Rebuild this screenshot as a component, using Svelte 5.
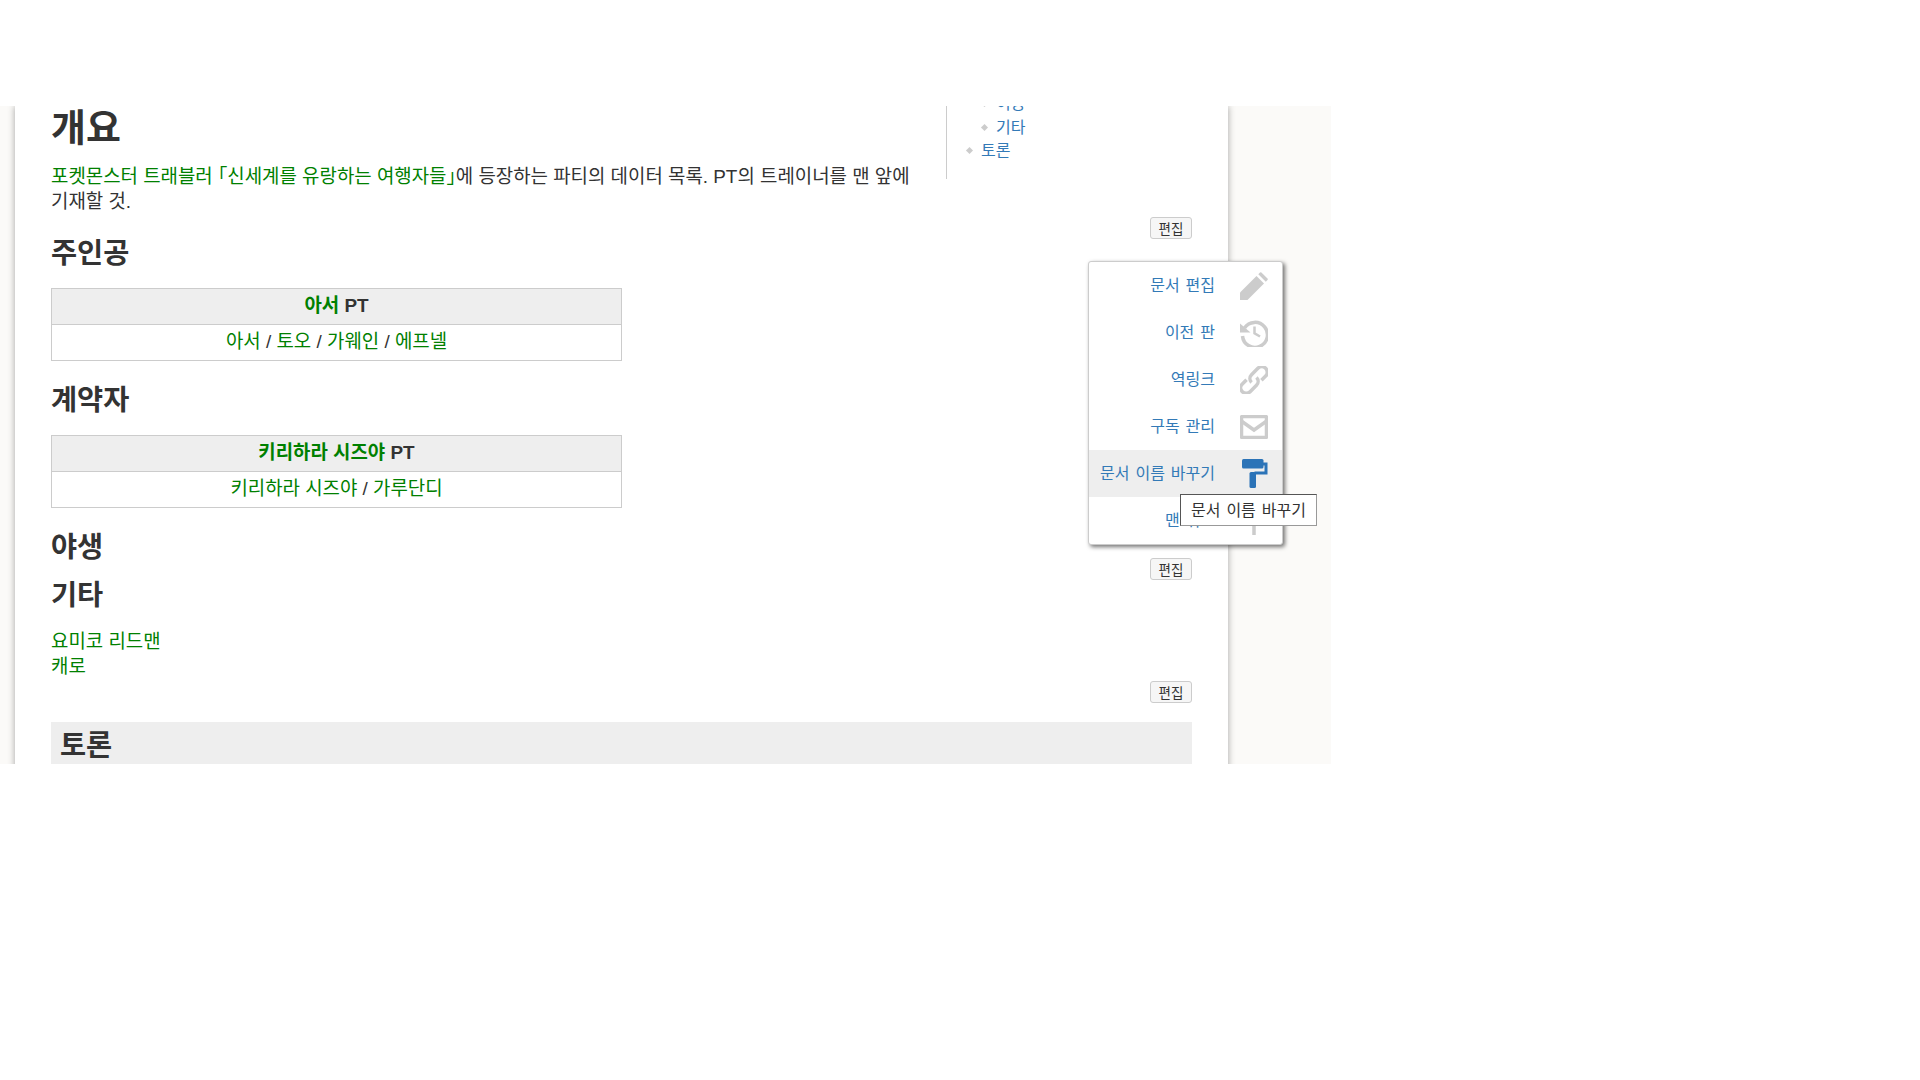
<script>
	const menu = [
		{ label: '문서 편집', icon: 'pencil' },
		{ label: '이전 판', icon: 'history' },
		{ label: '역링크', icon: 'link' },
		{ label: '구독 관리', icon: 'mail' },
		{ label: '문서 이름 바꾸기', icon: 'roller', active: true },
		{ label: '맨 위로', icon: 'up' }
	];
</script>

<div class="stage">
	<article class="page">
		<nav class="toc">
			<ul>
				<li class="sub"><a href="#a">이용</a></li>
				<li class="sub"><a href="#a">기타</a></li>
				<li><a href="#a">토론</a></li>
			</ul>
		</nav>

		<h1>개요</h1>
		<p class="intro">
			<a href="#a">포켓몬스터 트래블러 「신세계를 유랑하는 여행자들」</a>에 등장하는 파티의 데이터 목록. PT의 트레이너를 맨 앞에 기재할 것.
		</p>
		<div class="edit-row"><button>편집</button></div>

		<h2>주인공</h2>
		<table>
			<thead>
				<tr><th><a href="#a">아서</a> PT</th></tr>
			</thead>
			<tbody>
				<tr>
					<td><a href="#a">아서</a> / <a href="#a">토오</a> / <a href="#a">가웨인</a> / <a href="#a">에프넬</a></td>
				</tr>
			</tbody>
		</table>

		<h2 class="after-table">계약자</h2>
		<table>
			<thead>
				<tr><th><a href="#a">키리하라 시즈야</a> PT</th></tr>
			</thead>
			<tbody>
				<tr>
					<td><a href="#a">키리하라 시즈야</a> / <a href="#a">가루단디</a></td>
				</tr>
			</tbody>
		</table>

		<h2 class="wild">야생</h2>
		<div class="edit-row tight"><button>편집</button></div>

		<h2 class="etc">기타</h2>
		<div class="others">
			<a href="#a">요미코 리드맨</a><br />
			<a href="#a">캐로</a>
		</div>
		<div class="edit-row last"><button>편집</button></div>

		<h2 class="bar">토론</h2>
	</article>

	<div class="menu">
		{#each menu as item}
			<div class="menu-item" class:active={item.active}>
				<span class="menu-label">{item.label}</span>
				<span class="menu-icon">
					{#if item.icon === 'pencil'}
						<svg viewBox="0 0 28 28" width="28" height="28">
							<path d="M0 28V20.5L16.5 4L24 11.500L7.500 28Z" />
							<path d="M18.300 2.200L20 .5Q20.700-.2 21.400 .5L27.500 6.600Q28.200 7.300 27.500 8L25.800 9.700Z" />
						</svg>
					{:else if item.icon === 'history'}
						<svg viewBox="0 0 28 28" width="28" height="28">
							<path class="line" d="M4.500 9A12.500 12.500 0 1 1 2.500 17" />
							<path d="M0 4.500L10.500 13.500H0Z" />
							<path class="line thin" d="M14.500 7.500V14.200L20 17.500" />
						</svg>
					{:else if item.icon === 'link'}
						<svg viewBox="0 0 28 28" width="28" height="28">
							<g transform="rotate(45 14 14)">
								<path class="line" d="M19.500 9V3A5.500 5.500 0 0 0 8.500 3V12A5.500 5.500 0 0 0 14 17.500" />
								<path class="line" d="M8.500 19V25A5.500 5.500 0 0 0 19.500 25V16A5.500 5.500 0 0 0 14 10.500" />
							</g>
						</svg>
					{:else if item.icon === 'mail'}
						<svg viewBox="0 0 28 24" width="28" height="24">
							<rect class="line" x="1.500" y="1.500" width="25" height="21" rx="1" />
							<path class="line" d="M2 6.500L14 15L26 6.500" />
						</svg>
					{:else if item.icon === 'roller'}
						<svg viewBox="0 0 28 30" width="28" height="30">
							<rect x="2" y="0" width="21.500" height="9.500" rx="1.500" />
							<path class="hold" d="M23 5H26V14H14.500" />
							<rect x="9.500" y="13" width="6.500" height="16" rx="1.500" />
						</svg>
					{:else}
						<svg viewBox="0 0 28 28" width="28" height="28">
							<path class="line" d="M14 28V3M5 12L14 3L23 12" />
						</svg>
					{/if}
				</span>
			</div>
		{/each}
	</div>

	<div class="tooltip">문서 이름 바꾸기</div>
</div>

<style>
	:global(body) {
		margin: 0;
		background: #fff;
		font-family: "Liberation Sans", "Noto Sans CJK KR", sans-serif;
		color: #333;
	}

	a {
		color: #008000;
		text-decoration: none;
	}

	.stage {
		position: relative;
		margin-top: 106px;
		width: 1331px;
		height: 658px;
		padding-left: 15px;
		box-sizing: border-box;
		overflow: hidden;
		background: #fbfaf8;
	}

	.page {
		width: 1213px;
		height: 700px;
		box-sizing: border-box;
		padding: 0 36px;
		background: #fff;
		box-shadow: 0 0 7px rgba(0, 0, 0, 0.35);
		font-size: 18.900px;
		word-break: keep-all;
	}

	.toc {
		float: right;
		width: 246px;
		box-sizing: border-box;
		margin-top: -14px;
		padding: 0 0 16px 15px;
		border-left: 1px solid #ccc;
		font-size: 16px;
		line-height: 23.500px;
	}

	.toc ul {
		margin: 0;
		padding: 0;
		list-style: none;
	}

	.toc li {
		position: relative;
		padding-left: 19px;
	}

	.toc li.sub {
		padding-left: 34px;
	}

	.toc li::before {
		content: '';
		position: absolute;
		left: 5px;
		top: 9px;
		width: 5px;
		height: 5px;
		background: #ccc;
		transform: rotate(45deg);
	}

	.toc li.sub::before {
		left: 20px;
	}

	.toc a {
		color: #337ab7;
	}

	h1 {
		margin: 0;
		padding-top: 1px;
		font-size: 38px;
		line-height: 42px;
		font-weight: 700;
	}

	h2 {
		margin: 0;
		font-size: 28.400px;
		line-height: 28px;
		font-weight: 700;
	}

	.intro {
		margin: 16px 0 0;
		line-height: 24.500px;
		font-feature-settings: "halt";
	}

	.edit-row {
		display: flex;
		justify-content: flex-end;
		margin-top: 3px;
	}

	.edit-row.tight {
		margin-top: 0;
	}

	.edit-row.last {
		margin-top: 2px;
	}

	.edit-row button {
		height: 22px;
		width: 42px;
		padding: 0;
		border: 1px solid #ccc;
		border-radius: 3px;
		background: #f6f6f6;
		color: #333;
		font: 13.500px "Liberation Sans", "Noto Sans CJK KR", sans-serif;
	}

	table {
		width: 571px;
		margin-top: 21px;
		border-collapse: collapse;
		text-align: center;
	}

	th,
	td {
		padding: 0 0 2px;
		border: 1px solid #ccc;
		height: 33px;
		font-size: 18.900px;
		line-height: 24px;
	}

	th {
		background: #eee;
	}

	.after-table {
		margin-top: 25px;
	}

	.wild {
		margin-top: 25px;
		margin-bottom: -3px;
	}

	.etc {
		margin-top: 1px;
	}

	.others {
		margin-top: 20px;
		line-height: 25px;
	}

	.bar {
		margin-top: 19px;
		height: 60px;
		padding: 9px 9px 0;
		box-sizing: border-box;
		background: #eee;
	}

	.menu {
		position: absolute;
		left: 1088px;
		top: 155px;
		width: 195px;
		box-sizing: border-box;
		border: 1px solid #ccc;
		border-radius: 3px;
		background: #fff;
		box-shadow: 2px 2px 4px rgba(0, 0, 0, 0.55);
	}

	.menu-item {
		display: flex;
		align-items: center;
		height: 47px;
		padding-right: 14px;
		box-sizing: border-box;
	}

	.menu-item.active {
		background: #eee;
	}

	.menu-label {
		flex: 1;
		padding: 0 25px 3px 0;
		text-align: right;
		color: #337ab7;
		font-size: 16px;
		word-spacing: 1.500px;
	}

	.menu-icon {
		display: flex;
		width: 28px;
		justify-content: center;
		fill: #ccc;
	}

	.active .menu-icon {
		fill: #2b73b7;
	}

	.line {
		fill: none;
		stroke: #ccc;
		stroke-width: 3.500;
	}

	.thin {
		stroke-width: 2.500;
	}

	.hold {
		fill: none;
		stroke: #2b73b7;
		stroke-width: 3;
	}

	.tooltip {
		position: absolute;
		left: 1180px;
		top: 388px;
		width: 137px;
		height: 32px;
		box-sizing: border-box;
		padding: 2px 0 0 10px;
		border: 1px solid;
		border-color: #555 #999 #999 #555;
		background: #fff;
		color: #333;
		font-size: 16px;
		line-height: 28px;
		word-spacing: 1.500px;
		white-space: nowrap;
	}
</style>
